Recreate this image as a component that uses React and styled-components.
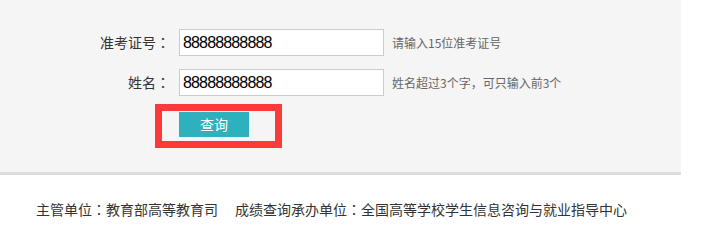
import React from "react";
import styled, { createGlobalStyle } from "styled-components";

const GlobalStyle = createGlobalStyle`
  body {
    margin: 0;
    background: #fff;
    font-family: "Noto Sans CJK SC", "Liberation Sans", sans-serif;
  }
`;

const Panel = styled.div`
  width: 681px;
  height: 175px;
  box-sizing: border-box;
  background-color: #f5f5f5;
  border-bottom: 3px solid #dddddd;
  padding-top: 29px;
`;

const Form = styled.div`
  display: grid;
  grid-template-columns: 170px 205px auto;
  column-gap: 9px;
  row-gap: 13px;
  align-items: center;
`;

const Label = styled.label`
  text-align: right;
  font-size: 14px;
  color: #333;
  line-height: 27px;
`;

// full-width colon centred in its box, as in the reference
const Colon = styled.span`
  font-family: "Noto Sans CJK JP", "Noto Sans CJK SC", sans-serif;
`;

const Input = styled.input`
  box-sizing: border-box;
  width: 205px;
  height: 27px;
  margin: 0;
  border: 1px solid #cccccc;
  background: #fff;
  padding: 0 2px 0 3px;
  font-family: "Liberation Sans", sans-serif;
  font-size: 16px;
  letter-spacing: -0.85px;
  color: #000;
  outline: none;
`;

const Hint = styled.span`
  font-size: 12px;
  color: #666;
  margin-left: -1px;
`;

const ButtonCell = styled.div`
  grid-column: 2;
  position: relative;
  margin-top: 2px;
  height: 25px;
`;

const SubmitButton = styled.button`
  width: 70px;
  height: 25px;
  border: none;
  padding: 0;
  background-color: #2fb0bd;
  color: #fff;
  font-family: "Noto Sans CJK SC", sans-serif;
  font-size: 14px;
  cursor: pointer;
`;

const Highlight = styled.div`
  position: absolute;
  left: -24px;
  top: -7px;
  width: 127px;
  height: 44px;
  box-sizing: border-box;
  border: 7px solid #fc3a3a;
  pointer-events: none;
`;

const Footer = styled.div`
  padding: 24px 0 0 36px;
  display: flex;
  gap: 17px;
  font-size: 14px;
  line-height: 20px;
  color: #333;
`;

export default function App() {
  return (
    <>
      <GlobalStyle />
      <Panel>
        <Form>
          <Label>准考证号<Colon>：</Colon></Label>
          <Input defaultValue="88888888888" />
          <Hint>请输入15位准考证号</Hint>
          <Label>姓名<Colon>：</Colon></Label>
          <Input defaultValue="88888888888" />
          <Hint>姓名超过3个字<Colon>，</Colon>可只输入前3个</Hint>
          <ButtonCell>
            <SubmitButton>查询</SubmitButton>
            <Highlight />
          </ButtonCell>
        </Form>
      </Panel>
      <Footer>
        <span>主管单位<Colon>：</Colon>教育部高等教育司</span>
        <span>成绩查询承办单位<Colon>：</Colon>全国高等学校学生信息咨询与就业指导中心</span>
      </Footer>
    </>
  );
}
